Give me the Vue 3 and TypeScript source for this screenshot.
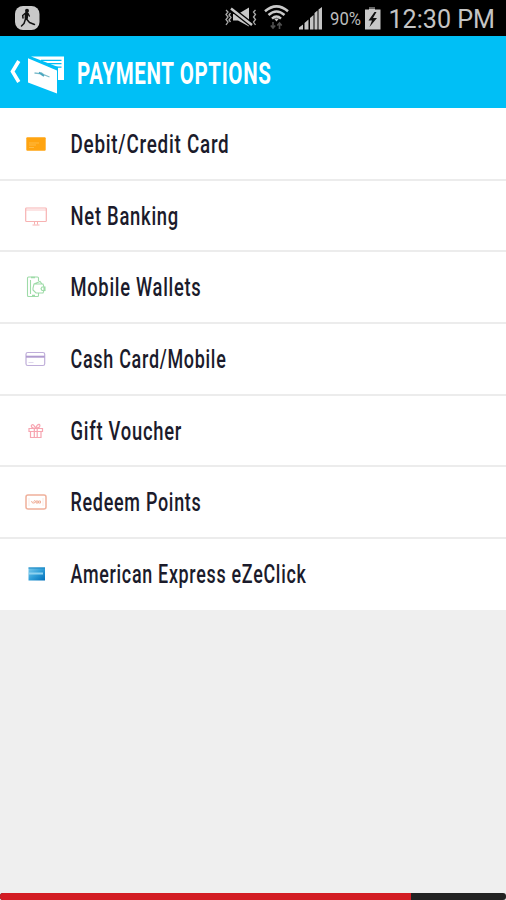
<script setup lang="ts">
interface PaymentOption {
  id: string
  label: string
  width: number
}

const options: PaymentOption[] = [
  { id: 'card', label: 'Debit/Credit Card', width: 159 },
  { id: 'bank', label: 'Net Banking', width: 108.5 },
  { id: 'wallet', label: 'Mobile Wallets', width: 131 },
  { id: 'cash', label: 'Cash Card/Mobile', width: 156 },
  { id: 'gift', label: 'Gift Voucher', width: 111.5 },
  { id: 'points', label: 'Redeem Points', width: 131 },
  { id: 'amex', label: 'American Express eZeClick', width: 236 },
]
</script>

<template>
  <div class="screen">
    <div class="status">
      <svg class="status-art" width="506" height="36" viewBox="0 0 506 36">
        <rect x="15" y="6" width="24.500" height="24" rx="8" fill="#c9c9c9" />
        <circle cx="27" cy="10.800" r="2" fill="#111" />
        <g fill="none" stroke="#111" stroke-linejoin="round" stroke-linecap="round">
          <path d="M26.500 13.500L26.300 18" stroke-width="3.400" />
          <path d="M26.500 19l3 3.500 5 2M25.500 19l-1.500 4.500-2.500 2.500M25 13.500l-2.300 2 .3 2.500M28 13.500l1.300 2.500" stroke-width="1.500" />
        </g>
        <g fill="#c9c9c9">
          <path d="M233 14h5l11-6.500v19l-11-6h-5z" />
          <path d="M231 8.500L252 25" stroke="#000" stroke-width="5" />
          <path d="M231 8.500L252 25" stroke="#c9c9c9" stroke-width="2.500" />
        </g>
        <path d="M226 10l2 2-2 2.500 2 2.500-2 2.500 2 2.500-2 3M230.500 13l-1.500 2 2 2.500-2 2.500 1.500 2M255.500 10l-2 2 2 2.500-2 2.500 2 2.500-2 2.500 2 3" fill="none" stroke="#aaa" stroke-width="1.300" />
        <g fill="none" stroke="#c9c9c9" stroke-width="2.500">
          <path d="M265 11.300Q276.500 1.500 288 11.300" />
          <path d="M268.500 15Q276.500 8 284.500 15" />
          <path d="M272 18.600Q276.500 14.500 281 18.600" />
        </g>
        <path d="M274 18.500h5l-2.500 3z" fill="#c9c9c9" />
        <path d="M273 22v6M270.800 25.500l2.200 2.500 2.200-2.500M279.500 29v-6M277.300 25.500l2.200-2.500 2.200 2.500" stroke="#505050" stroke-width="1.600" fill="none" />
        <path d="M299 29.500v-2l4-3v5zM304.500 29.500v-6.500l4-3.500v10zM310 29.500V18l3.500-3v14.500zM314.500 29.500V13l3-2.500v19zM318.500 29.500V9.500L322 7v22.500z" fill="#c4c4c4" />
        <text x="330" y="24.500" class="battery-text" textLength="31" lengthAdjust="spacingAndGlyphs">90%</text>
        <path d="M369 7h6v2.500h5.500v20h-15.500v-20h4z" fill="#c9c9c9" />
        <path d="M369 7h6v2h-6z" fill="#666" />
        <path d="M374.500 12l-6 8.500h3.500l-2.500 6.500 7.500-9h-4l3.500-6z" fill="#111" />
        <text x="388.500" y="28" class="clock" textLength="106.500" lengthAdjust="spacingAndGlyphs">12:30 PM</text>
      </svg>
    </div>

    <header class="header">
      <svg class="header-art" width="506" height="72" viewBox="0 0 506 72">
        <path d="M18.800 25L12.500 35.500L18.800 46" fill="none" stroke="#fff" stroke-width="3.600" />
        <path d="M31 20.500h33v23.500h-6V31z" fill="#fff" />
        <path d="M41 24.300h20.500M48 27.700h13.500M55 31.200h6.500" stroke="#00bff6" stroke-width="1.200" />
        <path d="M31 21.500L57.500 33" stroke="#00bff6" stroke-width="1" />
        <path d="M28 22.300L57 34.500V57.500L28 46.500z" fill="#fff" />
        <path d="M34.500 37l5 .7 2-.7 2 1.500 6 2.500" fill="none" stroke="#7cbccb" stroke-width="1.300" />
        <path d="M39 36.500l5 3.500" stroke="#48a5be" stroke-width="1.800" />
        <text x="77" y="48" class="title" textLength="194.500" lengthAdjust="spacingAndGlyphs">PAYMENT OPTIONS</text>
      </svg>
    </header>

    <main class="list">
      <div v-for="option in options" :key="option.id" class="row">
        <svg class="icon" width="24" height="24" viewBox="0 0 24 24" fill="none">
          <template v-if="option.id === 'card'">
            <rect x="2.300" y="5.300" width="19.400" height="13.500" rx="1" fill="#ffa411" />
            <path d="M5 11h10M5 13h7M5 15.500h5" stroke="#ffc252" stroke-width=".8" />
          </template>
          <g v-else-if="option.id === 'bank'" stroke="#f7b2b2">
            <rect x="1.700" y="4" width="20.600" height="13.500" rx=".8" stroke-width="1.200" />
            <path d="M2 6h20" stroke-width=".7" />
            <path d="M10.500 18v2.500M13.500 18v2.500M8.500 21h7" stroke-width="1" />
          </g>
          <g v-else-if="option.id === 'wallet'" stroke="#9edba8" stroke-width="1.100">
            <path d="M14.500 6V3q0-1-1-1h-9Q3.500 2 3.500 3v17.500q0 1 1 1h9q1 0 1-1V18M6.500 5v14" />
            <path d="M7 2.500h4M8 20.500h3" stroke-width="1.500" />
            <path d="M10 9l6-2.500 2 2.500M10 9h9l1 3v3.500l-1 2.500h-7l-3-3v-2zM21 12h-3l-1 1.700 1 1.800h3z" />
          </g>
          <g v-else-if="option.id === 'cash'" stroke="#bfaed9">
            <rect x="2" y="5.500" width="18.700" height="13" rx="1.800" stroke-width="1.200" />
            <path d="M2 9.700h18.700" stroke="#b09bcf" stroke-width="2" />
            <path d="M4.500 15.500h5" stroke-width=".5" />
          </g>
          <g v-else-if="option.id === 'gift'" stroke="#f7a5b1" stroke-width="1.200">
            <path d="M5 9.500h13.500v3H5zM6.500 12.500v6h10.500v-6M10.300 9.500v9M13.200 9.500v9M11.500 9.500C6 9.500 6.500 4.500 9.500 6l2.200 3C14 3.500 17 5 15.500 8l-4 1.500" />
          </g>
          <g v-else-if="option.id === 'points'" stroke="#efb09b">
            <rect x="2" y="5" width="20" height="14" rx="2" stroke-width="1.500" />
            <path d="M5 8v8M19 8v8" stroke="#f8dace" stroke-width=".6" />
            <path d="M7.500 11l1 2h2l1-2-1-.5-1 1M12 11v2h2v-2h-2M14.500 13v-2h2v2h-2" stroke-width="1" />
          </g>
          <template v-else>
            <defs>
              <linearGradient id="blue" x1="0" y1="0" x2="1" y2="1">
                <stop offset="0" stop-color="#80cdee" />
                <stop offset=".5" stop-color="#319fd8" />
                <stop offset="1" stop-color="#006eb9" />
              </linearGradient>
            </defs>
            <rect x="4.500" y="5.500" width="16.500" height="13" fill="url(#blue)" />
            <path d="M4.500 6h16.500" stroke="#1784c1" />
            <path d="M5 11.500h14" stroke="#8fd2f0" stroke-width="2" />
          </template>
        </svg>
        <svg class="label-box" width="300" height="40" viewBox="0 0 300 40">
          <text x=".5" y="29" class="label" :textLength="option.width" lengthAdjust="spacingAndGlyphs">{{ option.label }}</text>
        </svg>
      </div>
    </main>

    <div class="spacer"></div>
    <div class="progress"><div class="progress-fill"></div></div>
  </div>
</template>

<style>
body {
  margin: 0;
}
</style>

<style scoped>
.screen {
  width: 506px;
  height: 900px;
  display: flex;
  flex-direction: column;
  overflow: hidden;
  background: #efefef;
  font-family: Roboto, "Liberation Sans", sans-serif;
}
svg {
  display: block;
}
.status {
  height: 36px;
  background: #000;
}
.battery-text {
  font-size: 17.500px;
  fill: #bcbcbc;
}
.clock {
  font-size: 26px;
  fill: #c4c4c4;
}
.header {
  height: 72px;
  background: #00bff6;
}
.title {
  font-size: 31.500px;
  font-weight: 700;
  letter-spacing: 1px;
  fill: #fff;
}
.list {
  box-sizing: border-box;
  height: 501.500px;
  padding-top: 1px;
  display: grid;
  grid-template-rows: repeat(7, 71.700px);
  overflow: hidden;
  background: #fff;
}
.row {
  box-sizing: border-box;
  display: flex;
  align-items: center;
  padding-left: 24px;
  gap: 22px;
  background: #fff;
  border-bottom: 2px solid #ececec;
}
.row:last-child {
  border-bottom-color: #fff;
}
.label-box {
  overflow: visible;
}
.label {
  font-size: 25px;
  font-weight: 500;
  letter-spacing: 1px;
  fill: #1b1b2b;
}
.spacer {
  flex: 1;
}
.progress {
  height: 7px;
  background: #222;
  border-radius: 3px;
  overflow: hidden;
}
.progress-fill {
  width: 411px;
  height: 100%;
  background: #d31c23;
}
</style>
